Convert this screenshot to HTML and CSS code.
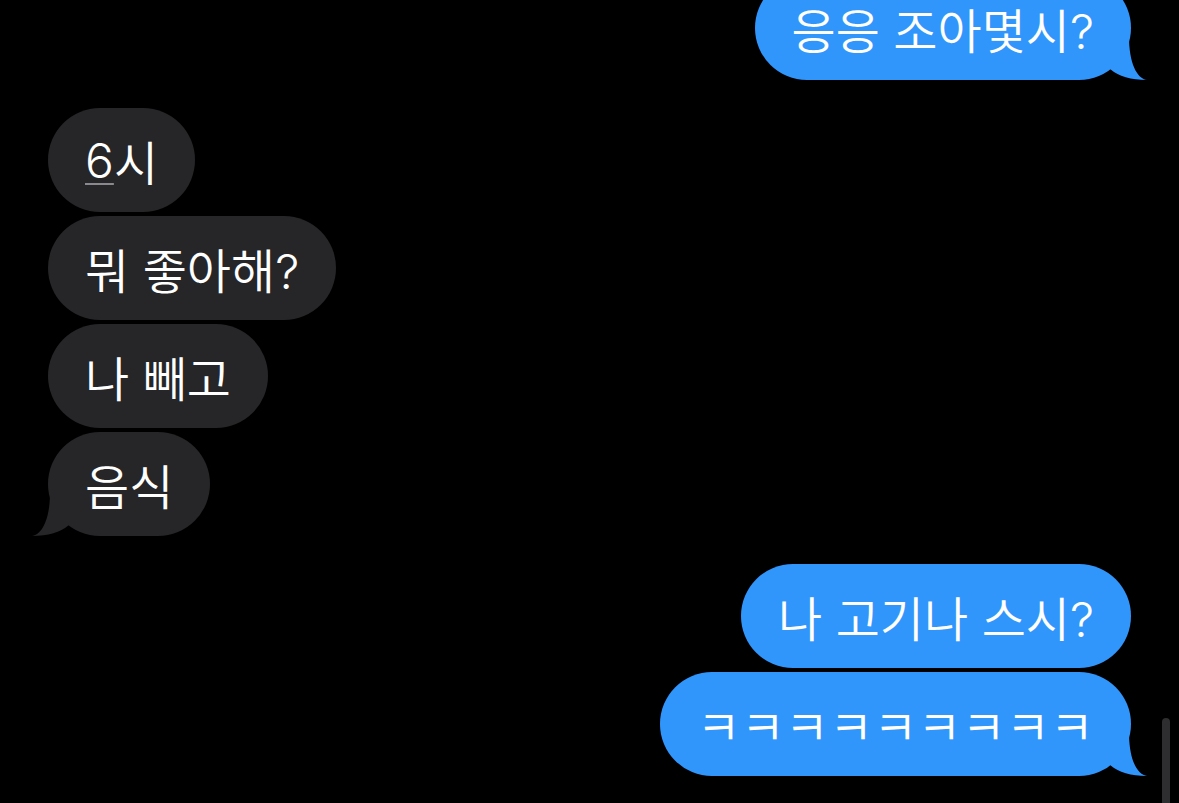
FILE: index.html
```html
<!DOCTYPE html>
<html lang="ko">
<head>
  <meta charset="UTF-8">
  <meta name="viewport" content="width=device-width, initial-scale=1.0">
  <title>메시지</title>
  <link rel="stylesheet" href="styles.css">
</head>
<body>

  <div class="thread">

    <div class="group sent">
      <div class="bubble has-tail">
        응응 조아몇시?
        <svg class="tail" viewBox="-34 -44 50 44"><path d="M-21 -11 Q-8 0 16 0 C8 -1 -1 -12 -2 -40 L-30 -40 L-30 -11 Z"/></svg>
      </div>
    </div>

    <div class="group received">
      <div class="bubble"><span class="detected">6</span>시</div>
      <div class="bubble">뭐 좋아해?</div>
      <div class="bubble">나 빼고</div>
      <div class="bubble has-tail">
        음식
        <svg class="tail" viewBox="-34 -44 50 44"><path d="M-21 -11 Q-8 0 16 0 C8 -1 -1 -12 -2 -40 L-30 -40 L-30 -11 Z"/></svg>
      </div>
    </div>

    <div class="group sent">
      <div class="bubble">나 고기나 스시?</div>
      <div class="bubble has-tail">
        ㅋㅋㅋㅋㅋㅋㅋㅋㅋ
        <svg class="tail" viewBox="-34 -44 50 44"><path d="M-21 -11 Q-8 0 16 0 C8 -1 -1 -12 -2 -40 L-30 -40 L-30 -11 Z"/></svg>
      </div>
    </div>

  </div>

  <div class="scroll-indicator"></div>

</body>
</html>
```

FILE: styles.css
```css
/* Common styles */
html, body {
  margin: 0;
  height: 100%;
  background-color: #000;
  overflow: hidden;
}

body {
  font-family: Inter, "Noto Sans CJK KR", sans-serif;
  color: #fff;
  position: relative;
}

/* Conversation */
.thread {
  display: flex;
  flex-direction: column;
  gap: 28px;
  margin-top: -24px;
  padding: 0 48px;
}

.group {
  display: flex;
  flex-direction: column;
  gap: 4px;
}

.group.sent {
  align-items: flex-end;
}

.group.received {
  align-items: flex-start;
}

/* Bubbles */
.bubble {
  position: relative;
  height: 104px;
  box-sizing: border-box;
  padding: 0 37px;
  border-radius: 52px;
  display: flex;
  align-items: center;
  font-size: 48px;
  font-weight: 350;
  white-space: nowrap;
}

.sent .bubble {
  background-color: #3196fb;
}

.received .bubble {
  background-color: #262628;
}

.tail {
  position: absolute;
  bottom: 0;
  width: 50px;
  height: 44px;
  overflow: visible;
}

.sent .tail {
  right: -16px;
  fill: #3196fb;
}

.received .tail {
  left: -16px;
  fill: #262628;
  transform: scaleX(-1);
}

/* Underlined time that the phone detected */
.detected {
  text-decoration: underline;
  text-decoration-color: #8a8a8e;
  text-decoration-thickness: 2px;
  text-underline-offset: 5px;
}

/* Scroll indicator */
.scroll-indicator {
  position: absolute;
  right: 9px;
  bottom: 0;
  width: 8px;
  height: 85px;
  border-radius: 4px 4px 0 0;
  background-color: #2e2e30;
}
```
